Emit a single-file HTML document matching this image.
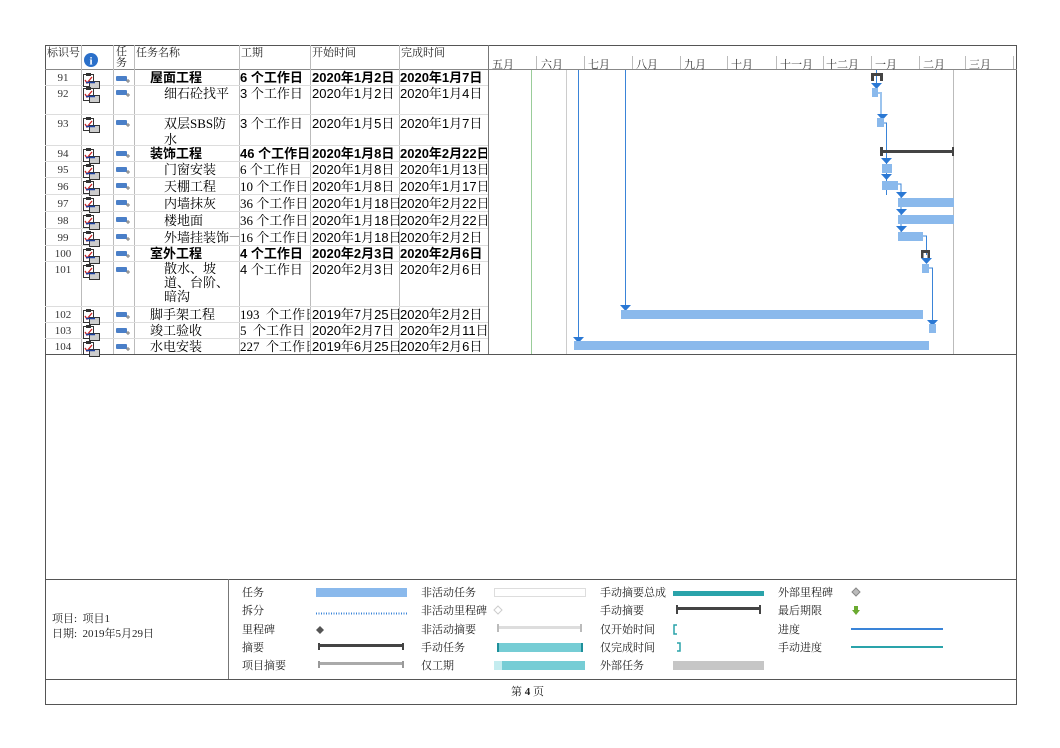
<!DOCTYPE html>
<html><head><meta charset="utf-8"><style>
*{margin:0;padding:0;box-sizing:border-box}
body{width:1060px;height:748px;background:#fff;position:relative;overflow:hidden;font-family:"Liberation Serif","Noto Serif CJK SC",serif;color:#000}
.t{position:absolute;white-space:nowrap;line-height:16px;padding-top:1px}
.h{font-size:11px;line-height:12px;color:#222;padding-top:0}
.c{font-size:13px}
.d{font-size:13px;font-family:"Liberation Sans","Noto Serif CJK SC",sans-serif}
.b{font-family:"Liberation Sans","Noto Sans CJK SC",sans-serif;font-weight:bold;font-size:13px}
.id{font-size:11px;color:#333;width:36px;text-align:center}
.lg{font-size:11px;font-family:"Liberation Serif","Noto Serif CJK SC",serif;color:#222;position:absolute;line-height:12px}
.m{font-size:11px;color:#333;position:absolute;top:56px;font-family:"Liberation Serif","Noto Serif CJK SC",serif}
.clip{overflow:hidden}
</style></head><body>
<svg width="1060" height="748" style="position:absolute;left:0;top:0">
<rect x="45.5" y="45.5" width="971" height="659" fill="none" stroke="#555"/>
<line x1="45" y1="354.5" x2="1017" y2="354.5" stroke="#555"/>
<line x1="45" y1="579.5" x2="1017" y2="579.5" stroke="#555"/>
<line x1="45" y1="679.5" x2="1017" y2="679.5" stroke="#555"/>
<line x1="228.5" y1="579" x2="228.5" y2="679" stroke="#777"/>
<line x1="45" y1="69.5" x2="1017" y2="69.5" stroke="#888"/>
<g stroke="#bbb">
<line x1="81.5" y1="45" x2="81.5" y2="354"/>
<line x1="113.5" y1="45" x2="113.5" y2="354"/>
<line x1="134.5" y1="45" x2="134.5" y2="354"/>
<line x1="239.5" y1="45" x2="239.5" y2="354"/>
<line x1="310.5" y1="45" x2="310.5" y2="354"/>
<line x1="399.5" y1="45" x2="399.5" y2="354"/>
</g>
<line x1="488.5" y1="45" x2="488.5" y2="354" stroke="#777"/>
<g stroke="#ddd">
<line x1="45" y1="85.5" x2="488" y2="85.5"/>
<line x1="45" y1="114.5" x2="488" y2="114.5"/>
<line x1="45" y1="145.5" x2="488" y2="145.5"/>
<line x1="45" y1="161.5" x2="488" y2="161.5"/>
<line x1="45" y1="177.5" x2="488" y2="177.5"/>
<line x1="45" y1="194.5" x2="488" y2="194.5"/>
<line x1="45" y1="211.5" x2="488" y2="211.5"/>
<line x1="45" y1="228.5" x2="488" y2="228.5"/>
<line x1="45" y1="245.5" x2="488" y2="245.5"/>
<line x1="45" y1="261.5" x2="488" y2="261.5"/>
<line x1="45" y1="306.5" x2="488" y2="306.5"/>
<line x1="45" y1="322.5" x2="488" y2="322.5"/>
<line x1="45" y1="338.5" x2="488" y2="338.5"/>
</g>
<circle cx="91" cy="60" r="7" fill="#2a6fc9"/>
<text x="91" y="64.5" font-size="11" font-weight="bold" fill="#fff" text-anchor="middle" font-family="Liberation Serif">i</text>
<g stroke="#bbb">
<line x1="536.5" y1="56" x2="536.5" y2="69"/><line x1="584.5" y1="56" x2="584.5" y2="69"/>
<line x1="632.5" y1="56" x2="632.5" y2="69"/><line x1="680.5" y1="56" x2="680.5" y2="69"/>
<line x1="727.5" y1="56" x2="727.5" y2="69"/><line x1="776.5" y1="56" x2="776.5" y2="69"/>
<line x1="823.5" y1="56" x2="823.5" y2="69"/><line x1="871.5" y1="56" x2="871.5" y2="69"/>
<line x1="919.5" y1="56" x2="919.5" y2="69"/><line x1="965.5" y1="56" x2="965.5" y2="69"/>
<line x1="1013.5" y1="56" x2="1013.5" y2="69"/>
</g>
<line x1="531.5" y1="70" x2="531.5" y2="354" stroke="#9c9"/>
<line x1="566.5" y1="70" x2="566.5" y2="354" stroke="#ccc"/>
<line x1="953.5" y1="70" x2="953.5" y2="354" stroke="#bbb"/>
<g stroke="#3a84d8" fill="none" stroke-width="1">
<line x1="578.5" y1="70" x2="578.5" y2="338"/>
<line x1="625.5" y1="70" x2="625.5" y2="306"/>
<line x1="876.5" y1="70" x2="876.5" y2="84"/>
<path d="M878 93 h3 v24" stroke="#9cc4ee" stroke-width="2"/>
<path d="M884 123 h2.5 v44 M886.5 167 v28"/>
<path d="M897 184 h4 v12 v40"/>
<path d="M923 236 h3.5 v19"/>
<path d="M929 268 h3.5 v53"/>
</g>
<g fill="#2a78d4">
<path d="M573 337h11l-5.5 6z"/>
<path d="M620 305h11l-5.5 6z"/>
<path d="M871 83h11l-5.5 6z"/>
<path d="M877 114h11l-5.5 6z"/>
<path d="M881 158h11l-5.5 6z"/>
<path d="M881 174h11l-5.5 6z"/>
<path d="M896 192h11l-5.5 6z"/>
<path d="M896 209h11l-5.5 6z"/>
<path d="M896 226h11l-5.5 6z"/>
<path d="M921 258h11l-5.5 6z"/>
<path d="M927 320h11l-5.5 6z"/>
</g>
<g fill="#8ab9ec">
<rect x="872" y="88" width="6" height="9"/>
<rect x="877" y="118" width="7" height="9"/>
<rect x="882" y="164" width="10" height="9"/>
<rect x="882" y="181" width="16" height="9"/>
<rect x="898" y="198" width="56" height="9"/>
<rect x="898" y="215" width="56" height="9"/>
<rect x="898" y="232" width="25" height="9"/>
<rect x="922" y="264" width="7" height="9"/>
<rect x="621" y="310" width="302" height="9"/>
<rect x="929" y="324" width="7" height="9"/>
<rect x="574" y="341" width="355" height="9"/>
</g>
<g fill="#444">
<rect x="871" y="73" width="12" height="3"/><rect x="871" y="73" width="3" height="8"/><rect x="880" y="73" width="3" height="8"/>
<rect x="881" y="150" width="73" height="3"/><rect x="880" y="147" width="3" height="9"/><rect x="952" y="147" width="2" height="9"/>
<rect x="921" y="250" width="9" height="3"/><rect x="921" y="250" width="2.5" height="8"/><rect x="927.5" y="250" width="2.5" height="8"/>
</g>
<g id="icons"></g>
<rect x="316" y="588" width="91" height="9" fill="#8ab9ec"/>
<line x1="316" y1="613.5" x2="407" y2="613.5" stroke="#3a84d8" stroke-width="2" stroke-dasharray="1,1.5"/>
<path d="M320 626l4 4-4 4-4-4z" fill="#555"/>
<rect x="319" y="644" width="85" height="3" fill="#444"/><rect x="318" y="643" width="2" height="7" fill="#444"/><rect x="402" y="643" width="2" height="7" fill="#444"/>
<rect x="319" y="662" width="85" height="3" fill="#aaa"/><rect x="318" y="661" width="2" height="7" fill="#999"/><rect x="402" y="661" width="2" height="7" fill="#999"/>
<rect x="494.5" y="588.5" width="91" height="8" fill="#fff" stroke="#ddd"/>
<path d="M498 606l4 4-4 4-4-4z" fill="#fff" stroke="#ccc"/>
<rect x="497" y="626" width="85" height="3" fill="#ddd"/><rect x="497" y="624" width="2" height="8" fill="#bbb"/><rect x="580" y="624" width="2" height="8" fill="#bbb"/>
<rect x="497" y="643" width="86" height="9" fill="#76cdd5"/><rect x="497" y="643" width="2" height="9" fill="#1e8f9a"/><rect x="581" y="643" width="2" height="9" fill="#1e8f9a"/>
<rect x="494" y="661" width="91" height="9" fill="#76cdd5"/><rect x="494" y="661" width="8" height="9" fill="#c4ecef"/>
<rect x="673" y="591" width="91" height="5" fill="#2aa3aa"/>
<rect x="677" y="607" width="84" height="3" fill="#444"/><rect x="676" y="605" width="2" height="9" fill="#444"/><rect x="759" y="605" width="2" height="9" fill="#444"/>
<path d="M677 625h-3v9h3" fill="none" stroke="#2aa3aa" stroke-width="1.5"/>
<path d="M677 643h3v8h-3" fill="none" stroke="#2aa3aa" stroke-width="1.5"/>
<rect x="673" y="661" width="91" height="9" fill="#c6c6c6"/>
<path d="M856 588l4 4-4 4-4-4z" fill="#bbb" stroke="#888"/>
<path d="M854 606h4v4h2l-4 5-4-5h2z" fill="#6aaa30"/>
<rect x="851" y="628" width="92" height="2" fill="#3a84d8"/>
<rect x="851" y="646" width="92" height="2" fill="#2aa3aa"/>
</svg>

<script>
(function(){
var ys=[73,87,117,148,164,180,197,214,231,248,264,309,325,341];
var g='';
ys.forEach(function(y){
 g+='<g transform="translate(83,'+y+')"><rect x="0.5" y="1.5" width="10" height="12" fill="#fff" stroke="#333"/><rect x="3" y="0" width="5" height="3" fill="#333"/><path d="M2 7l2 3 5-6" stroke="#c22" fill="none" stroke-width="1.3"/><rect x="6.5" y="8.5" width="10" height="7" fill="#ccc" stroke="#333"/><line x1="3" y1="9.5" x2="12" y2="9.5" stroke="#1a3fa0" stroke-width="1.5"/></g>';
 g+='<g transform="translate(116,'+(y+1)+')"><rect x="0" y="2" width="11" height="5" rx="1" fill="#4a7fc8"/><path d="M10 7h4M12 5v4" stroke="#777" stroke-width="1"/></g>';
});
document.getElementById('icons').innerHTML=g;
})();
</script>

<div class="t h" style="left:47px;top:47px">标识号</div>
<div class="t h" style="left:116px;top:47px;line-height:11px">任<br>务</div>
<div class="t h" style="left:136px;top:47px">任务名称</div>
<div class="t h" style="left:241px;top:47px">工期</div>
<div class="t h" style="left:312px;top:47px">开始时间</div>
<div class="t h" style="left:401px;top:47px">完成时间</div>

<div class="m" style="left:492px">五月</div>
<div class="m" style="left:541px">六月</div>
<div class="m" style="left:588px">七月</div>
<div class="m" style="left:636px">八月</div>
<div class="m" style="left:684px">九月</div>
<div class="m" style="left:731px">十月</div>
<div class="m" style="left:780px">十一月</div>
<div class="m" style="left:826px">十二月</div>
<div class="m" style="left:875px">一月</div>
<div class="m" style="left:923px">二月</div>
<div class="m" style="left:969px">三月</div>

<div class="t id" style="left:45px;top:69px">91</div>
<div class="t b" style="left:150px;top:69px">屋面工程</div>
<div class="t b clip" style="left:240px;top:69px;width:70px">6 个工作日</div>
<div class="t b clip" style="left:312px;top:69px;width:87px">2020年1月2日</div>
<div class="t b clip" style="left:400px;top:69px;width:87px">2020年1月7日</div>

<div class="t id" style="left:45px;top:85px">92</div>
<div class="t c" style="left:164px;top:85px">细石砼找平</div>
<div class="t d clip" style="left:240px;top:85px;width:70px">3 个工作日</div>
<div class="t d clip" style="left:312px;top:85px;width:87px">2020年1月2日</div>
<div class="t d clip" style="left:400px;top:85px;width:87px">2020年1月4日</div>

<div class="t id" style="left:45px;top:115px">93</div>
<div class="t c" style="left:164px;top:115px">双层SBS防<br>水</div>
<div class="t d clip" style="left:240px;top:115px;width:70px">3 个工作日</div>
<div class="t d clip" style="left:312px;top:115px;width:87px">2020年1月5日</div>
<div class="t d clip" style="left:400px;top:115px;width:87px">2020年1月7日</div>

<div class="t id" style="left:45px;top:145px">94</div>
<div class="t b" style="left:150px;top:145px">装饰工程</div>
<div class="t b clip" style="left:240px;top:145px;width:70px">46 个工作日</div>
<div class="t b clip" style="left:312px;top:145px;width:87px">2020年1月8日</div>
<div class="t b clip" style="left:400px;top:145px;width:87px">2020年2月22日</div>

<div class="t id" style="left:45px;top:161px">95</div>
<div class="t c" style="left:164px;top:161px">门窗安装</div>
<div class="t c clip" style="left:240px;top:161px;width:70px">6 个工作日</div>
<div class="t d clip" style="left:312px;top:161px;width:87px">2020年1月8日</div>
<div class="t d clip" style="left:400px;top:161px;width:87px">2020年1月13日</div>

<div class="t id" style="left:45px;top:178px">96</div>
<div class="t c" style="left:164px;top:178px">天棚工程</div>
<div class="t c clip" style="left:240px;top:178px;width:70px">10 个工作日</div>
<div class="t d clip" style="left:312px;top:178px;width:87px">2020年1月8日</div>
<div class="t d clip" style="left:400px;top:178px;width:87px">2020年1月17日</div>

<div class="t id" style="left:45px;top:195px">97</div>
<div class="t c" style="left:164px;top:195px">内墙抹灰</div>
<div class="t c clip" style="left:240px;top:195px;width:70px">36 个工作日</div>
<div class="t d clip" style="left:312px;top:195px;width:87px">2020年1月18日</div>
<div class="t d clip" style="left:400px;top:195px;width:87px">2020年2月22日</div>

<div class="t id" style="left:45px;top:212px">98</div>
<div class="t c" style="left:164px;top:212px">楼地面</div>
<div class="t c clip" style="left:240px;top:212px;width:70px">36 个工作日</div>
<div class="t d clip" style="left:312px;top:212px;width:87px">2020年1月18日</div>
<div class="t d clip" style="left:400px;top:212px;width:87px">2020年2月22日</div>

<div class="t id" style="left:45px;top:229px">99</div>
<div class="t c clip" style="left:164px;top:229px;width:75px">外墙挂装饰一</div>
<div class="t c clip" style="left:240px;top:229px;width:70px">16 个工作日</div>
<div class="t d clip" style="left:312px;top:229px;width:87px">2020年1月18日</div>
<div class="t d clip" style="left:400px;top:229px;width:87px">2020年2月2日</div>

<div class="t id" style="left:45px;top:245px">100</div>
<div class="t b" style="left:150px;top:245px">室外工程</div>
<div class="t b clip" style="left:240px;top:245px;width:70px">4 个工作日</div>
<div class="t b clip" style="left:312px;top:245px;width:87px">2020年2月3日</div>
<div class="t b clip" style="left:400px;top:245px;width:87px">2020年2月6日</div>

<div class="t id" style="left:45px;top:261px">101</div>
<div class="t c" style="left:164px;top:261px;line-height:14px">散水、坡<br>道、台阶、<br>暗沟</div>
<div class="t d clip" style="left:240px;top:261px;width:70px">4 个工作日</div>
<div class="t d clip" style="left:312px;top:261px;width:87px">2020年2月3日</div>
<div class="t d clip" style="left:400px;top:261px;width:87px">2020年2月6日</div>

<div class="t id" style="left:45px;top:306px">102</div>
<div class="t c" style="left:150px;top:306px">脚手架工程</div>
<div class="t c clip" style="left:240px;top:306px;width:70px">193 &nbsp;个工作日</div>
<div class="t d clip" style="left:312px;top:306px;width:87px">2019年7月25日</div>
<div class="t d clip" style="left:400px;top:306px;width:87px">2020年2月2日</div>

<div class="t id" style="left:45px;top:322px">103</div>
<div class="t c" style="left:150px;top:322px">竣工验收</div>
<div class="t c clip" style="left:240px;top:322px;width:70px">5 &nbsp;个工作日</div>
<div class="t d clip" style="left:312px;top:322px;width:87px">2020年2月7日</div>
<div class="t d clip" style="left:400px;top:322px;width:87px">2020年2月11日</div>

<div class="t id" style="left:45px;top:338px">104</div>
<div class="t c" style="left:150px;top:338px">水电安装</div>
<div class="t c clip" style="left:240px;top:338px;width:70px">227 &nbsp;个工作日</div>
<div class="t d clip" style="left:312px;top:338px;width:87px">2019年6月25日</div>
<div class="t d clip" style="left:400px;top:338px;width:87px">2020年2月6日</div>

<div class="lg" style="left:52px;top:613px">项目: &nbsp;项目1</div>
<div class="lg" style="left:52px;top:628px">日期: &nbsp;2019年5月29日</div>

<div class="lg" style="left:242px;top:587px">任务</div>
<div class="lg" style="left:242px;top:605px">拆分</div>
<div class="lg" style="left:242px;top:624px">里程碑</div>
<div class="lg" style="left:242px;top:642px">摘要</div>
<div class="lg" style="left:242px;top:660px">项目摘要</div>
<div class="lg" style="left:421px;top:587px">非活动任务</div>
<div class="lg" style="left:421px;top:605px">非活动里程碑</div>
<div class="lg" style="left:421px;top:624px">非活动摘要</div>
<div class="lg" style="left:421px;top:642px">手动任务</div>
<div class="lg" style="left:421px;top:660px">仅工期</div>
<div class="lg" style="left:600px;top:587px">手动摘要总成</div>
<div class="lg" style="left:600px;top:605px">手动摘要</div>
<div class="lg" style="left:600px;top:624px">仅开始时间</div>
<div class="lg" style="left:600px;top:642px">仅完成时间</div>
<div class="lg" style="left:600px;top:660px">外部任务</div>
<div class="lg" style="left:778px;top:587px">外部里程碑</div>
<div class="lg" style="left:778px;top:605px">最后期限</div>
<div class="lg" style="left:778px;top:624px">进度</div>
<div class="lg" style="left:778px;top:642px">手动进度</div>

<div class="lg" style="left:511px;top:686px">第 <b>4</b> 页</div>
</body></html>
